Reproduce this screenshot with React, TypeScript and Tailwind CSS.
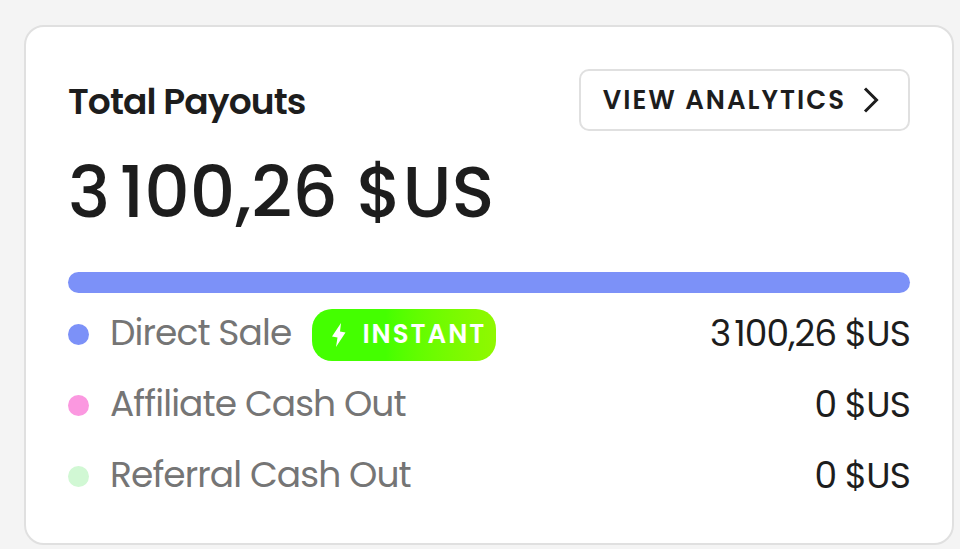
interface Payout {
  label: string;
  amount: string;
  dot: string;
  instant?: boolean;
}

const payouts: Payout[] = [
  {
    label: "Direct Sale",
    amount: "3\u202f100,26 $US",
    dot: "bg-[#7c91f8]",
    instant: true,
  },
  { label: "Affiliate Cash Out", amount: "0 $US", dot: "bg-[#fb98e0]" },
  { label: "Referral Cash Out", amount: "0 $US", dot: "bg-[#d1f8d4]" },
];

function InstantBadge() {
  return (
    <span className="flex h-[52px] items-center gap-4 rounded-[20px] bg-linear-to-r from-[#44ff00] from-40% to-[#90f800] pr-[10px] pl-5 text-[26px] font-semibold tracking-[2px] text-white">
      <svg width="14" height="26" viewBox="0 0 14 26" fill="currentColor">
        <path d="M9 1L0 14.500L5.500 15.500L4 25L13.500 10.500L8 9.500Z" />
      </svg>
      INSTANT
    </span>
  );
}

export default function App() {
  return (
    <div className="bg-[#f4f4f4] pt-[25px] pr-[6px] pb-1 pl-6 font-['Poppins','Inter',sans-serif] text-[#1d1d1d]">
      <section className="rounded-[20px] border-2 border-[#e0e0e0] bg-white px-[42px] pt-[42px] pb-[31px]">
        {/* Header */}
        <div className="flex items-center justify-between">
          <h2 className="pt-1 text-4xl font-semibold tracking-tight">
            Total Payouts
          </h2>
          <button
            type="button"
            className="flex h-[62px] items-center gap-4 rounded-[10px] border-2 border-[#e0e0e0] pr-7 pl-[22px] text-[26px] font-semibold tracking-[2px]"
          >
            VIEW ANALYTICS
            <svg
              width="18"
              height="28"
              viewBox="0 0 18 28"
              fill="none"
              stroke="currentColor"
              strokeWidth="3"
            >
              <path d="M3 2.500L14.500 14L3 25.500" />
            </svg>
          </button>
        </div>

        <p className="mt-4 text-[71px] leading-[90px] font-medium">
          {"3\u202f100,26 $US"}
        </p>

        <div className="mt-[35px] h-[21px] rounded-full bg-[#7c91f8]" />

        {/* Breakdown */}
        <ul className="mt-[6px] text-4xl tracking-tight">
          {payouts.map((payout) => (
            <li
              key={payout.label}
              className="flex h-[71px] items-center justify-between"
            >
              <div className="flex items-center gap-[21px]">
                <span className={`size-[21px] rounded-full ${payout.dot}`} />
                <span className="pb-[3px] text-[#757575]">{payout.label}</span>
                {payout.instant && <InstantBadge />}
              </div>
              <span className="pb-[2px]">{payout.amount}</span>
            </li>
          ))}
        </ul>
      </section>
    </div>
  );
}
